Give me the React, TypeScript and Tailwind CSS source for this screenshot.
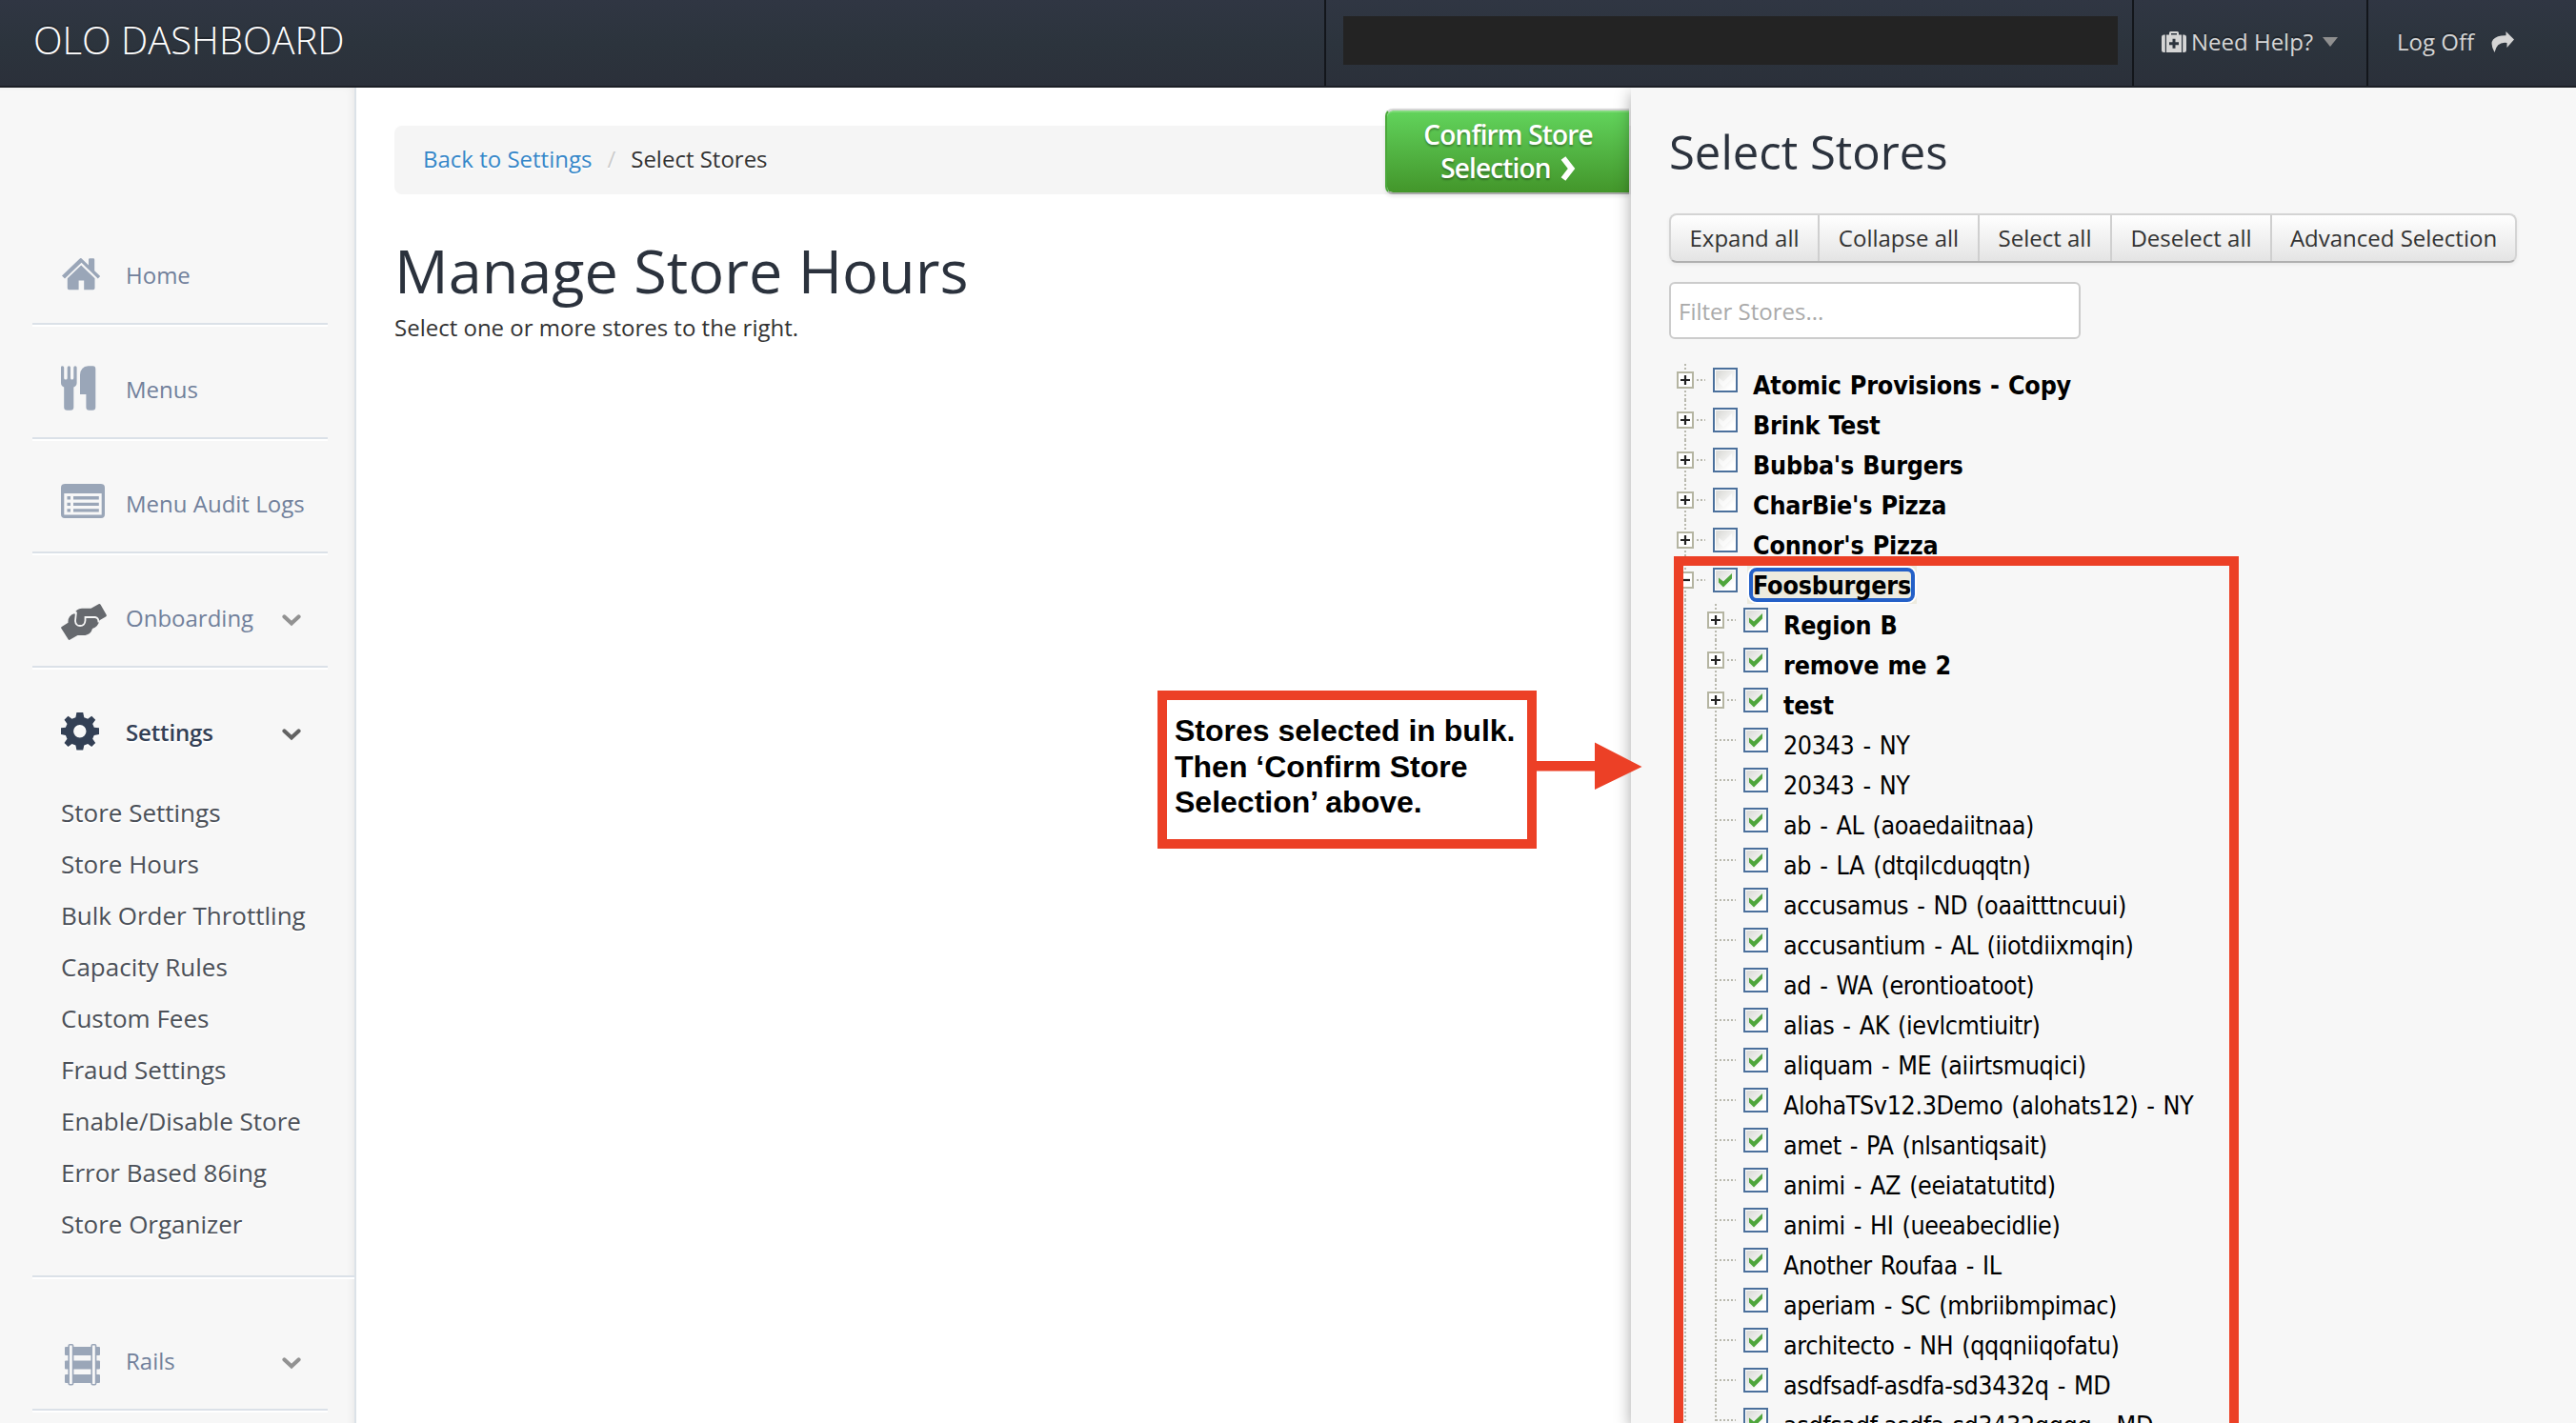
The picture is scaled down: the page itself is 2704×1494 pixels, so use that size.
import React from 'react';

interface NavItem {
  label: string;
  icon: React.ReactNode;
  expandable?: boolean;
  active?: boolean;
}

interface TreeNode {
  label: string;
  group?: boolean;
}

const HomeIcon = () => (
  <svg viewBox="0 0 48 48" className="size-12 shrink-0" fill="#9aa6b8">
    <path d="M21.500 7.200 L29 14.500 V8.500 Q29 7.200 30.200 7.200 H34 Q35.200 7.200 35.200 8.500 V20.300 L41.200 26 L38.800 28.500 L21.500 11.800 L4 28.500 L1 25.500 L19.500 7.800 Q20.500 6.600 21.500 7.200 Z" />
    <path d="M21.200 14.500 L35.500 28.300 V38.500 Q35.500 40.200 33.800 40.200 H24.200 V30.500 H18.600 V40.200 H8.500 Q6.800 40.200 6.800 38.500 V28.300 Z" />
  </svg>
);

const MenusIcon = () => (
  <svg viewBox="0 0 48 48" className="size-12 shrink-0" fill="#9aa6b8">
    <path d="M0 1.500 Q0 .3 1.500 .3 Q3.200 .3 3.200 1.800 V13 Q3.200 14.500 5 14.500 Q6.700 14.500 6.700 13 V1.800 Q6.700 .3 8.400 .3 Q10 .3 10 1.800 V13 Q10 14.500 11.500 14.500 Q13.300 14.500 13.300 13 V1.800 Q13.300 .3 15 .3 Q16.600 .3 16.600 1.800 V18 Q16.600 21 13.300 22.500 V43.500 Q13.300 46.800 10 46.800 H6.500 Q3.200 46.800 3.200 43.500 V22.500 Q0 21 0 18 Z" />
    <path d="M28.500 .3 H33.500 Q36.300 .3 36.300 3.200 V43.500 Q36.300 46.800 33 46.800 H29.700 Q26.400 46.800 26.400 43.500 V30 H20 V9.500 Q20.500 1 28.500 .3 Z" />
  </svg>
);

const LogsIcon = () => (
  <svg viewBox="0 0 48 48" className="size-12 shrink-0" fill="#9aa6b8">
    <path
      fillRule="evenodd"
      d="M4 4 H42 Q46 4 46 8 V36 Q46 40 42 40 H4 Q0 40 0 36 V8 Q0 4 4 4 Z M3.300 14 V36.500 H42.700 V14 Z"
    />
    <path d="M6.500 17 h3.500 v3.400 h-3.500 z M13 17 h26.800 v3.400 h-26.800 z M6.500 23.700 h3.500 v3.400 h-3.500 z M13 23.700 h26.800 v3.400 h-26.800 z M6.500 30.200 h3.500 v3.400 h-3.500 z M13 30.200 h26.800 v3.400 h-26.800 z" />
  </svg>
);

const HandshakeIcon = () => (
  <svg viewBox="0 0 48 48" className="size-12 shrink-0">
    <path
      fill="#66696e"
      d="M39.500 10.200 Q41 9.700 41.700 11 L47.700 21.500 Q48.200 23 47 23.600 L40.500 27.300 Q39 34.500 33 36 Q31.500 41.800 25.500 43 H17.500 L9.200 47.800 Q8.200 48.200 7.500 47 L.2 35.500 Q-.2 34.500 .8 34 L7.500 29.800 Q7 22 14.500 20 Q16 15 22 14.700 H31.500 Z"
    />
    <path
      fill="none"
      stroke="#f7f7f7"
      strokeWidth="1.800"
      d="M16 18.500 L15 28 Q15.500 33 20 33 Q25 33 25.500 27.500 V24 H36 Q39.500 24.500 39.500 29.500 M16 18.500 L14 20"
    />
  </svg>
);

const GearIcon = () => (
  <svg viewBox="0 0 48 48" className="size-12 shrink-0 drop-shadow-[0_2px_0_#fff]">
    <path
      fill="#334055"
      fillRule="evenodd"
      d="M16.400 4 H23.200 L24.300 9.200 L28.200 10.800 L32.200 7.700 L36.200 11.700 L33.200 15.900 L34.800 19.700 L40 20.300 V27 L34.800 27.900 L33.200 31.800 L36.200 36 L32.200 40 L28.200 37 L24.300 38.600 L23.200 43.500 H16.400 L15.400 38.600 L11.500 37 L7.500 40 L3.500 36 L6.500 31.800 L4.900 27.900 L0 27 V20.300 L4.900 19.700 L6.500 15.900 L3.500 11.700 L7.500 7.700 L11.500 10.800 L15.400 9.200 Z M19.800 17 A6.700 6.700 0 1 0 19.800 30.400 A6.700 6.700 0 1 0 19.800 17 Z"
    />
  </svg>
);

const RailsIcon = () => (
  <svg viewBox="0 0 48 52" className="mt-1 h-[52px] w-12 shrink-0">
    <g fill="#9aa6b8">
      <rect x="4" y="10" width="37" height="9" rx="1" />
      <rect x="4" y="24.500" width="37" height="9" rx="1" />
      <rect x="4" y="39" width="37" height="9" rx="1" />
    </g>
    <g fill="#f7f7f7" stroke="#9aa6b8" strokeWidth="1.600">
      <rect x="8.200" y="7.800" width="4.400" height="42" rx="1" />
      <rect x="32.200" y="7.800" width="4.400" height="42" rx="1" />
    </g>
  </svg>
);

const Chevron = ({ color }: { color: string }) => (
  <svg viewBox="0 0 20 14" className="h-3.5 w-5" fill="none" stroke={color} strokeWidth="4.200" strokeLinecap="round">
    <path d="M2.500 3.500 L10 10.500 L17.500 3.500" />
  </svg>
);

const navItems: NavItem[] = [
  { label: 'Home', icon: <HomeIcon /> },
  { label: 'Menus', icon: <MenusIcon /> },
  { label: 'Menu Audit Logs', icon: <LogsIcon /> },
  { label: 'Onboarding', icon: <HandshakeIcon />, expandable: true },
];

const settingsLinks = [
  'Store Settings',
  'Store Hours',
  'Bulk Order Throttling',
  'Capacity Rules',
  'Custom Fees',
  'Fraud Settings',
  'Enable/Disable Store',
  'Error Based 86ing',
  'Store Organizer',
];

const brands = ['Atomic Provisions - Copy', 'Brink Test', "Bubba's Burgers", "CharBie's Pizza", "Connor's Pizza"];

const foosburgersStores: TreeNode[] = [
  { label: 'Region B', group: true },
  { label: 'remove me 2', group: true },
  { label: 'test', group: true },
  { label: '20343 - NY' },
  { label: '20343 - NY' },
  { label: 'ab - AL (aoaedaiitnaa)' },
  { label: 'ab - LA (dtqilcduqqtn)' },
  { label: 'accusamus - ND (oaaitttncuui)' },
  { label: 'accusantium - AL (iiotdiixmqin)' },
  { label: 'ad - WA (erontioatoot)' },
  { label: 'alias - AK (ievlcmtiuitr)' },
  { label: 'aliquam - ME (aiirtsmuqici)' },
  { label: 'AlohaTSv12.3Demo (alohats12) - NY' },
  { label: 'amet - PA (nlsantiqsait)' },
  { label: 'animi - AZ (eeiatatutitd)' },
  { label: 'animi - HI (ueeabecidlie)' },
  { label: 'Another Roufaa - IL' },
  { label: 'aperiam - SC (mbriibmpimac)' },
  { label: 'architecto - NH (qqqniiqofatu)' },
  { label: 'asdfsadf-asdfa-sd3432q - MD' },
  { label: 'asdfsadf-asdfa-sd3432qqqq - MD' },
];

const NavRow = ({ label, icon, expandable, active }: NavItem) => (
  <div className="flex h-full items-center pt-4 pl-[30px]">
    {icon}
    <span
      className={
        active
          ? 'ml-5 flex-1 pt-0.5 text-2xl font-semibold tracking-[-0.15px] text-[#334055] [text-shadow:0_2px_0_#fff]'
          : 'ml-5 flex-1 pt-0.5 text-2xl text-[#71809b]'
      }
    >
      {label}
    </span>
    {expandable && (
      <span className="mr-7 pt-1.5">
        <Chevron color={active ? '#636363' : '#929292'} />
      </span>
    )}
  </div>
);

const Sidebar = () => (
  <aside className="w-[374px] shrink-0 border-r-2 border-[#dce2e8] bg-[#f7f7f7] pt-[129px] pl-[34px] whitespace-nowrap shadow-[inset_-8px_4px_8px_-6px_rgba(0,0,0,0.06)]">
    {navItems.map((item) => (
      <div key={item.label} className="h-[120px] w-[310px] border-b-2 border-[#dbe1e8] shadow-[0_2px_0_#fff]">
        <NavRow {...item} />
      </div>
    ))}
    <div className="border-b-2 border-[#dbe1e8] pb-[27px] shadow-[0_2px_0_#fff]">
      <div className="h-[118px] w-[310px]">
        <NavRow label="Settings" icon={<GearIcon />} expandable active />
      </div>
      <ul className="pt-[7px] pl-[30px] text-[26px] leading-[54px] text-[#4b5058] [text-shadow:0_2px_0_#fff]">
        {settingsLinks.map((link) => (
          <li key={link}>{link}</li>
        ))}
      </ul>
    </div>
    <div className="mt-5 h-[120px] w-[310px] border-b-2 border-[#dbe1e8] shadow-[0_2px_0_#fff]">
      <NavRow label="Rails" icon={<RailsIcon />} expandable />
    </div>
  </aside>
);

const Header = () => (
  <header className="flex h-[92px] border-b-2 border-[#1c1f26] bg-linear-to-b from-[#303643] via-[#2c343d] to-[#2b303a] whitespace-nowrap text-[#d5d5d5]">
    <div className="flex flex-1 items-center pb-1.5 pl-[35px] text-[40px] font-light text-white [text-shadow:0_-2px_0_rgba(0,0,0,0.3)]">
      OLO DASHBOARD
    </div>
    <div className="w-[848px] border-l-2 border-[#13161b] pt-[17px] pl-[18px]">
      <div className="h-[51px] w-[813px] bg-[#232323]" />
    </div>
    <div className="flex w-[246px] items-center border-l-2 border-[#13161b] pb-0.5 pl-[29px] text-2xl [text-shadow:0_-2px_0_rgba(0,0,0,0.3)]">
      <svg viewBox="0 0 26 22" className="mr-[5px] h-[22px] w-[26px]" fill="#d5d5d5">
        <path
          fillRule="evenodd"
          d="M5 3.500 H8 V1.500 Q8 0 9.500 0 H16.500 Q18 0 18 1.500 V3.500 H21 V22 H5 Z M10 2 V3.500 H16 V2 Z M11.500 7.800 V11.300 H8 V14.300 H11.500 V17.800 H14.500 V14.300 H18 V11.300 H14.500 V7.800 Z"
        />
        <path d="M3.800 3.500 V22 H2.500 Q0 22 0 19.500 V6 Q0 3.500 2.500 3.500 Z M22.200 3.500 V22 H23.500 Q26 22 26 19.500 V6 Q26 3.500 23.500 3.500 Z" />
      </svg>
      Need Help?
      <span className="ml-2.5 border-x-8 border-t-10 border-x-transparent border-t-[#8f8f8f]" />
    </div>
    <div className="flex w-[220px] items-center border-l-2 border-[#13161b] pb-0.5 pl-[30px] text-2xl [text-shadow:0_-2px_0_rgba(0,0,0,0.3)]">
      Log Off
      <svg viewBox="0 0 24 22" className="ml-[18px] h-[22px] w-6" fill="#d5d5d5">
        <path d="M15.500 0 L24 8.500 L16.500 17 V12 Q6 10.500 3.500 22 Q-1.500 13 2 8.500 Q6 4 15.500 4.200 Z" />
      </svg>
    </div>
  </header>
);

/* gutter lines and the expand box of one tree row */
const Toggle = ({ kind, first }: { kind: 'plus' | 'minus' | 'none'; first?: boolean }) => (
  <svg viewBox="0 0 38 42" className="h-[42px] w-[38px] shrink-0">
    <g stroke="#b9b9ae" strokeWidth="2" strokeDasharray="2 2">
      <path d={first ? 'M9 4 V42' : 'M9 0 V42'} />
      <path d="M9 21 H30" />
    </g>
    {kind !== 'none' && (
      <>
        <rect x="-1" y="11" width="20" height="20" fill="#f7f7f7" />
        <rect x="1" y="13" width="16" height="16" fill="#fff" stroke="#b5b5a2" strokeWidth="2" />
        <path
          d={kind === 'plus' ? 'M4 21 H14 M9 16 V26' : 'M4 21 H14'}
          stroke="#222"
          strokeWidth="2.200"
        />
      </>
    )}
  </svg>
);

const Checkbox = ({ checked }: { checked?: boolean }) => (
  <svg viewBox="0 0 26 26" className="mb-px size-[26px] shrink-0">
    <defs>
      <linearGradient id="boxFill" x1="0" y1="0" x2="1" y2="1">
        <stop offset="0.150" stopColor="#dededb" />
        <stop offset="0.800" stopColor="#ffffff" />
      </linearGradient>
    </defs>
    <rect x="1" y="1" width="24" height="24" fill="#fff" stroke="#4b709c" strokeWidth="2" />
    <rect x="3" y="3" width="20" height="20" fill="url(#boxFill)" />
    <path
      d="M6 10.500 L11 14.500 L20 6 V11.500 L11 20.500 L6 15.500 Z"
      fill={checked ? '#4fa63c' : '#ffffff'}
      fillOpacity={checked ? 1 : 0.6}
    />
  </svg>
);

const StoreTree = () => (
  <div className="mt-[22px] font-['DejaVu_Sans_Condensed','DejaVu_Sans',sans-serif] text-[26.67px] leading-[42px] text-black [font-stretch:condensed]">
    {brands.map((brand, i) => (
      <div key={brand} className="flex h-[42px] items-center pl-2">
        <Toggle kind="plus" first={i === 0} />
        <Checkbox />
        <span className="pt-3 pl-4 font-bold tracking-[-0.2px] [word-spacing:1px]">{brand}</span>
      </div>
    ))}
    <div className="flex h-[42px] items-center pl-2">
      <Toggle kind="minus" />
      <Checkbox checked />
      <span className="mt-2.5 ml-2.5 flex h-10 items-center bg-[#edebdf] p-0.5">
        <span className="flex h-9 items-center rounded-lg border-4 border-[#2460c8] bg-[#edebdf] pt-px font-bold tracking-[-0.2px] ring-2 ring-white">
          Foosburgers
        </span>
      </span>
    </div>
    {foosburgersStores.map((store, i) => (
      <div key={i} className="flex h-[42px] items-center pl-2">
        <svg viewBox="0 0 32 42" className="h-[42px] w-8 shrink-0">
          <path d="M9 0 V42" stroke="#b9b9ae" strokeWidth="2" strokeDasharray="2 2" />
        </svg>
        <Toggle kind={store.group ? 'plus' : 'none'} first={i === 0} />
        <Checkbox checked />
        <span
          className={
            store.group
              ? 'pt-3 pl-4 font-bold tracking-[-0.2px] [word-spacing:1px]'
              : 'pt-3 pl-4 tracking-[-0.38px] [word-spacing:1.8px]'
          }
        >
          {store.label}
        </span>
      </div>
    ))}
  </div>
);

const StorePanel = () => (
  <section className="relative w-[992px] shrink-0 bg-[#f7f7f7] pt-[37px] pl-10 whitespace-nowrap shadow-[0_6px_16px_rgba(0,0,0,0.35)]">
    <h2 className="text-[49px] leading-[60px] text-[#2b323d]">Select Stores</h2>
    <div className="mt-[35px] flex h-[52px] w-[890px] rounded-lg border-2 border-[#d4d4d4] border-b-[#b0b0b0] bg-linear-to-b from-white to-[#e4e4e4] text-2xl leading-[47px] text-[#333] shadow-[0_2px_4px_rgba(0,0,0,0.06)] [text-shadow:0_2px_0_#fff]">
      <button className="w-[156px] border-r-2 border-[#cfcfcf] pb-0.5">Expand all</button>
      <button className="w-[168px] border-r-2 border-[#cfcfcf] pb-0.5">Collapse all</button>
      <button className="w-[139px] border-r-2 border-[#cfcfcf] pb-0.5">Select all</button>
      <button className="w-[168px] border-r-2 border-[#cfcfcf] pb-0.5">Deselect all</button>
      <button className="flex-1 pb-0.5">Advanced Selection</button>
    </div>
    <input
      className="mt-5 block h-[60px] w-[432px] rounded-md border-2 border-[#ccc] bg-white px-2 text-2xl placeholder:text-[#aaa]"
      placeholder="Filter Stores..."
    />
    <StoreTree />
  </section>
);

const App = () => {
  return (
    <div className="relative h-[1494px] w-[2704px] overflow-hidden bg-white font-['Open_Sans',sans-serif]">
      <Header />
      <div className="flex h-[1402px] overflow-hidden">
        <Sidebar />
        <main className="relative flex-1 pt-10 pl-10 whitespace-nowrap">
          <div className="flex h-[72px] items-center rounded-l-lg bg-[#f5f5f5] pb-0.5 pl-[30px] text-2xl text-[#333] [text-shadow:0_2px_0_#fff]">
            <a className="text-[#3587c9]">Back to Settings</a>
            <span className="mx-4 text-[#ccc]">/</span>
            <span>Select Stores</span>
          </div>
          <h1 className="mt-12 text-[63px] leading-16 text-[#2b323d]">Manage Store Hours</h1>
          <p className="mt-2 text-2xl leading-10 text-[#333]">Select one or more stores to the right.</p>
          <button className="absolute top-[22px] right-0.5 h-[90px] w-[256px] rounded-l-lg border-2 border-r-0 border-[#4aa83a] border-t-[#d5d5d5] border-b-[#a9a9a9] bg-linear-to-b from-[#62d45c] to-[#43962a] bg-clip-padding text-[28px] leading-[35px] font-semibold tracking-[-0.85px] text-white shadow-[0_2px_4px_rgba(0,0,0,0.1),inset_0_2px_0_rgba(255,255,255,0.2)] [text-shadow:0_2px_2px_rgba(0,0,0,0.3)]">
            Confirm Store
            <br />
            Selection
            <svg viewBox="0 0 16 26" className="mb-1 ml-2.5 inline h-[26px] w-4" fill="none" stroke="#fff" strokeWidth="6">
              <path d="M3 2 L11.500 13 L3 24" />
            </svg>
          </button>
        </main>
        <StorePanel />
      </div>

      {/* annotations */}
      <div className="absolute top-[725px] left-[1215px] h-[166px] w-[398px] border-10 border-[#ec4026] bg-white pt-3.5 pl-2 font-['Liberation_Sans',sans-serif] text-[32px] leading-[37.5px] font-bold whitespace-nowrap text-black">
        Stores selected in bulk.
        <br />
        Then ‘Confirm Store
        <br />
        Selection’ above.
      </div>
      <svg viewBox="0 0 112 52" className="absolute top-[779px] left-[1612px] h-[52px] w-28" fill="#ec4026">
        <path d="M0 20 H62 V.5 L111.500 26 L62 50 V30.500 H0 Z" />
      </svg>
      <div className="absolute top-[584px] left-[1757px] h-[930px] w-[593px] border-10 border-[#ec4026]" />
    </div>
  );
};

export default App;
